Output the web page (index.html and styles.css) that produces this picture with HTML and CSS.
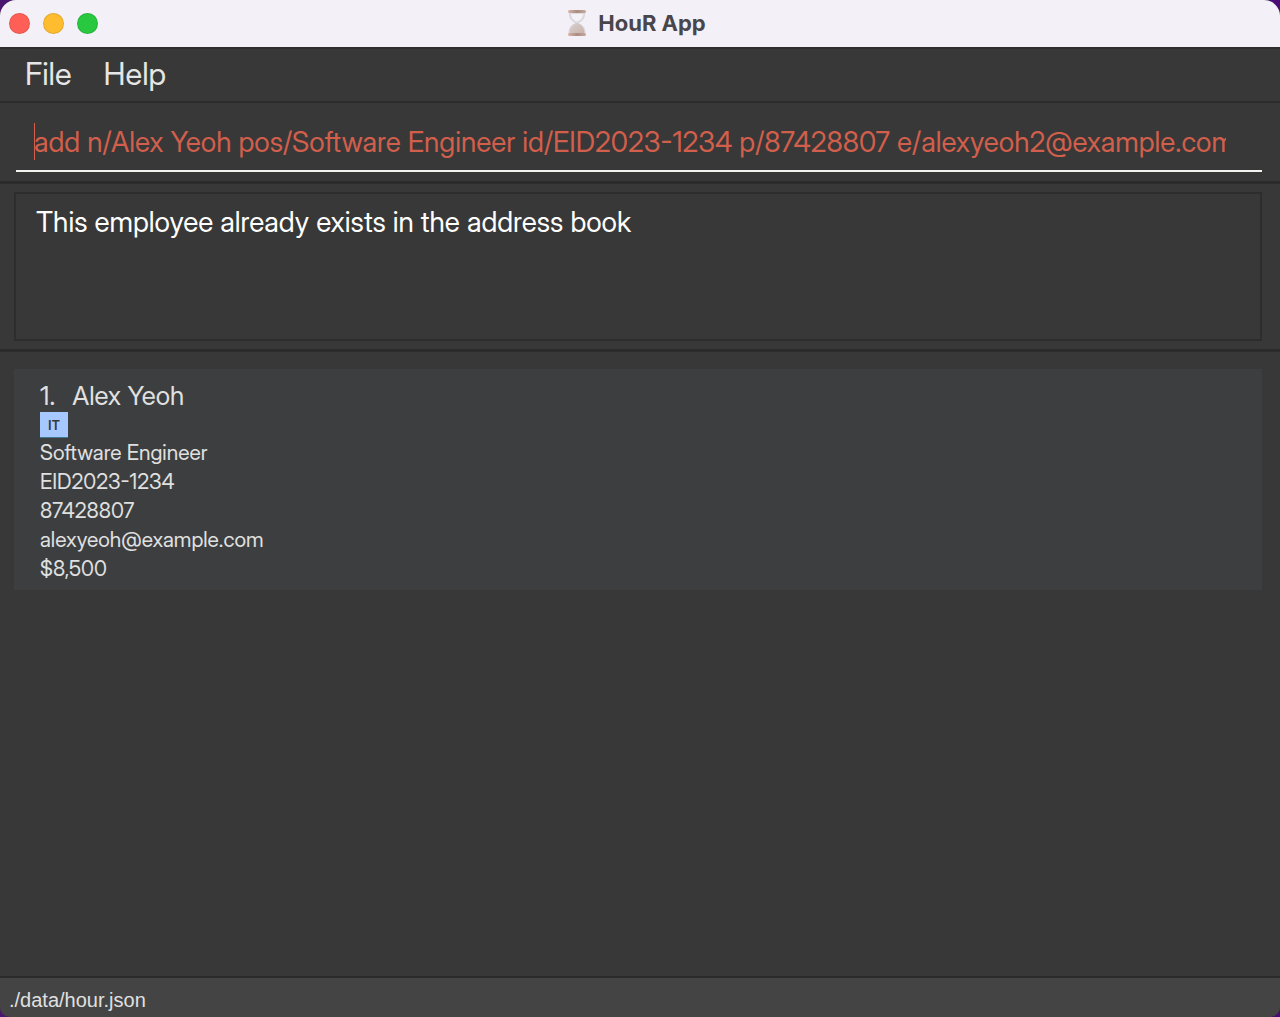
FILE: index.html
```html
<!DOCTYPE html>
<html lang="en">
<head>
<meta charset="utf-8">
<title>HouR App</title>
<link rel="stylesheet" href="styles.css">
</head>
<body>
<div class="window">
  <header class="titlebar">
    <div class="controls">
      <button class="control close" aria-label="Close"></button>
      <button class="control minimize" aria-label="Minimize"></button>
      <button class="control zoom" aria-label="Zoom"></button>
    </div>
    <h1 class="title">
      <svg class="hourglass" viewBox="0 0 20 28" aria-hidden="true">
        <defs>
          <linearGradient id="sand" x1="0" y1="0" x2="1" y2="1">
            <stop offset="0" stop-color="#d9d0d0"/>
            <stop offset="1" stop-color="#c9b1a8"/>
          </linearGradient>
          <linearGradient id="cap" x1="0" y1="0" x2="1" y2="0">
            <stop offset="0" stop-color="#d8b5a6"/>
            <stop offset=".5" stop-color="#a98c83"/>
            <stop offset="1" stop-color="#c9a99c"/>
          </linearGradient>
        </defs>
        <path d="M2.500 3C2 9 4.500 12 8.500 13.500V14.500C4.500 16 1.500 19 2 25H18C18.500 19 15.500 16 11.500 14.500V13.500C15.500 12 18 9 17.500 3Z" fill="#dedbe1" stroke="#d2ced4" stroke-width=".7"/>
        <path d="M4 5C4.500 10 7 11 10 12.500C13 11 15.500 10 16 5Z" fill="#f4f2f6"/>
        <path d="M10 14C5 16 2.500 19 2.500 25H17.500C17.500 19 15 16 10 14Z" fill="url(#sand)"/>
        <rect x="1" y="1" width="18" height="3" rx="1.500" fill="url(#cap)"/>
        <rect x="1" y="24" width="18" height="3" rx="1.500" fill="url(#cap)"/>
      </svg>
      <span>HouR App</span>
    </h1>
  </header>
  <nav class="menubar">
    <button class="menu">File</button>
    <button class="menu">Help</button>
  </nav>
  <section class="command">
    <div class="field">
      <input class="command-input" type="text" aria-label="Command" spellcheck="false" value="add n/Alex Yeoh pos/Software Engineer id/EID2023-1234 p/87428807 e/alexyeoh2@example.com">
      <span class="caret"></span>
    </div>
  </section>
  <section class="result">
    <textarea class="result-display" aria-label="Result" readonly>This employee already exists in the address book</textarea>
  </section>
  <main class="list">
    <article class="card">
      <h2 class="name"><span>1.</span><span>Alex Yeoh</span></h2>
      <div class="tags"><span class="tag">IT</span></div>
      <p class="detail">Software Engineer</p>
      <p class="detail">EID2023-1234</p>
      <p class="detail">87428807</p>
      <p class="detail">alexyeoh@example.com</p>
      <p class="detail">$8,500</p>
    </article>
  </main>
  <footer class="status">./data/hour.json</footer>
</div>
</body>
</html>
```
FILE: styles.css
```css
* { box-sizing: border-box; }

body {
  margin: 0;
  background: linear-gradient(90deg, #4b1670, #35108a 60%, #4a0a78);
  font-family: "Inter Display", Inter, "Liberation Sans", sans-serif;
  font-weight: 400;
  color: #e0e0e0;
}

button, input, textarea { font: inherit; }

.window {
  display: flex;
  flex-direction: column;
  min-height: 100vh;
  overflow: hidden;
  border-radius: 16px 16px 10px 10px;
  background: #383838;
}

.titlebar {
  display: grid;
  grid-template-columns: 1fr auto 1fr;
  align-items: center;
  height: 47px;
  padding: 0 9px;
  background: #f4f0f7;
}

.controls { display: flex; gap: 13px; }

.control {
  width: 21px;
  height: 21px;
  padding: 0;
  border: 1px solid rgba(0, 0, 0, .1);
  border-radius: 50%;
}

.close { background: #ff5f57; }
.minimize { background: #febc2e; }
.zoom { background: #28c840; }

.title {
  display: flex;
  align-items: center;
  gap: 11px;
  margin: 0;
  padding: 0 7px 2px 0;
  font-family: Inter, "Liberation Sans", sans-serif;
  font-size: 22px;
  font-weight: 700;
  line-height: 28px;
  color: #48464b;
}

.hourglass { width: 20px; height: 28px; }

.menubar {
  display: flex;
  align-items: flex-start;
  gap: 32px;
  height: 56px;
  padding: 0 25px;
  border-top: 2px solid #2e2e2e;
  border-bottom: 2px solid #2b2b2b;
}

.menu {
  padding: 0;
  border: 0;
  background: none;
  font-size: 31px;
  line-height: 50px;
  color: #e6e6e6;
}

.command {
  padding: 10px 18px 9px 16px;
  border-bottom: 3px solid #2b2b2b;
}

.field {
  position: relative;
  padding: 0 36px 0 18px;
  border-bottom: 2px solid #f4f4f0;
}

.command-input {
  display: block;
  width: 100%;
  height: 57px;
  padding: 0;
  border: 0;
  outline: 0;
  background: none;
  font-size: 28px;
  color: #d15f4c;
}

.caret {
  position: absolute;
  left: 18px;
  top: 10px;
  width: 1px;
  height: 37px;
  background: #d15f4c;
}

.result {
  padding: 8px 18px 8px 14px;
  border-bottom: 3px solid #2b2b2b;
}

.result-display {
  display: block;
  width: 100%;
  height: 149px;
  padding: 10px 20px;
  border: 2px solid #2d2d2d;
  outline: 0;
  resize: none;
  background: none;
  font-size: 28px;
  line-height: 36px;
  color: #fff;
}

.list {
  flex: 1;
  padding: 17px 18px 17px 14px;
}

.card {
  padding: 10px 26px 7px;
  background: #3c3e3f;
}

.name {
  display: flex;
  gap: 17px;
  margin: 0;
  font-size: 26px;
  font-weight: 400;
  line-height: 33px;
}

.tags { display: flex; height: 26px; }

.tag {
  height: 26px;
  padding: 0 8px;
  border-bottom: 1px solid #3e7b91;
  background: #a6c8ff;
  font-family: Inter, "Liberation Sans", sans-serif;
  font-size: 13px;
  font-weight: 600;
  line-height: 26px;
  color: #383838;
}

.detail {
  margin: 0;
  font-size: 21px;
  line-height: 29px;
}

.status {
  height: 41px;
  padding: 0 9px;
  border-top: 2px solid #2b2b2b;
  background: #444;
  font-family: "Liberation Sans", sans-serif;
  font-size: 20px;
  line-height: 44px;
}
```
